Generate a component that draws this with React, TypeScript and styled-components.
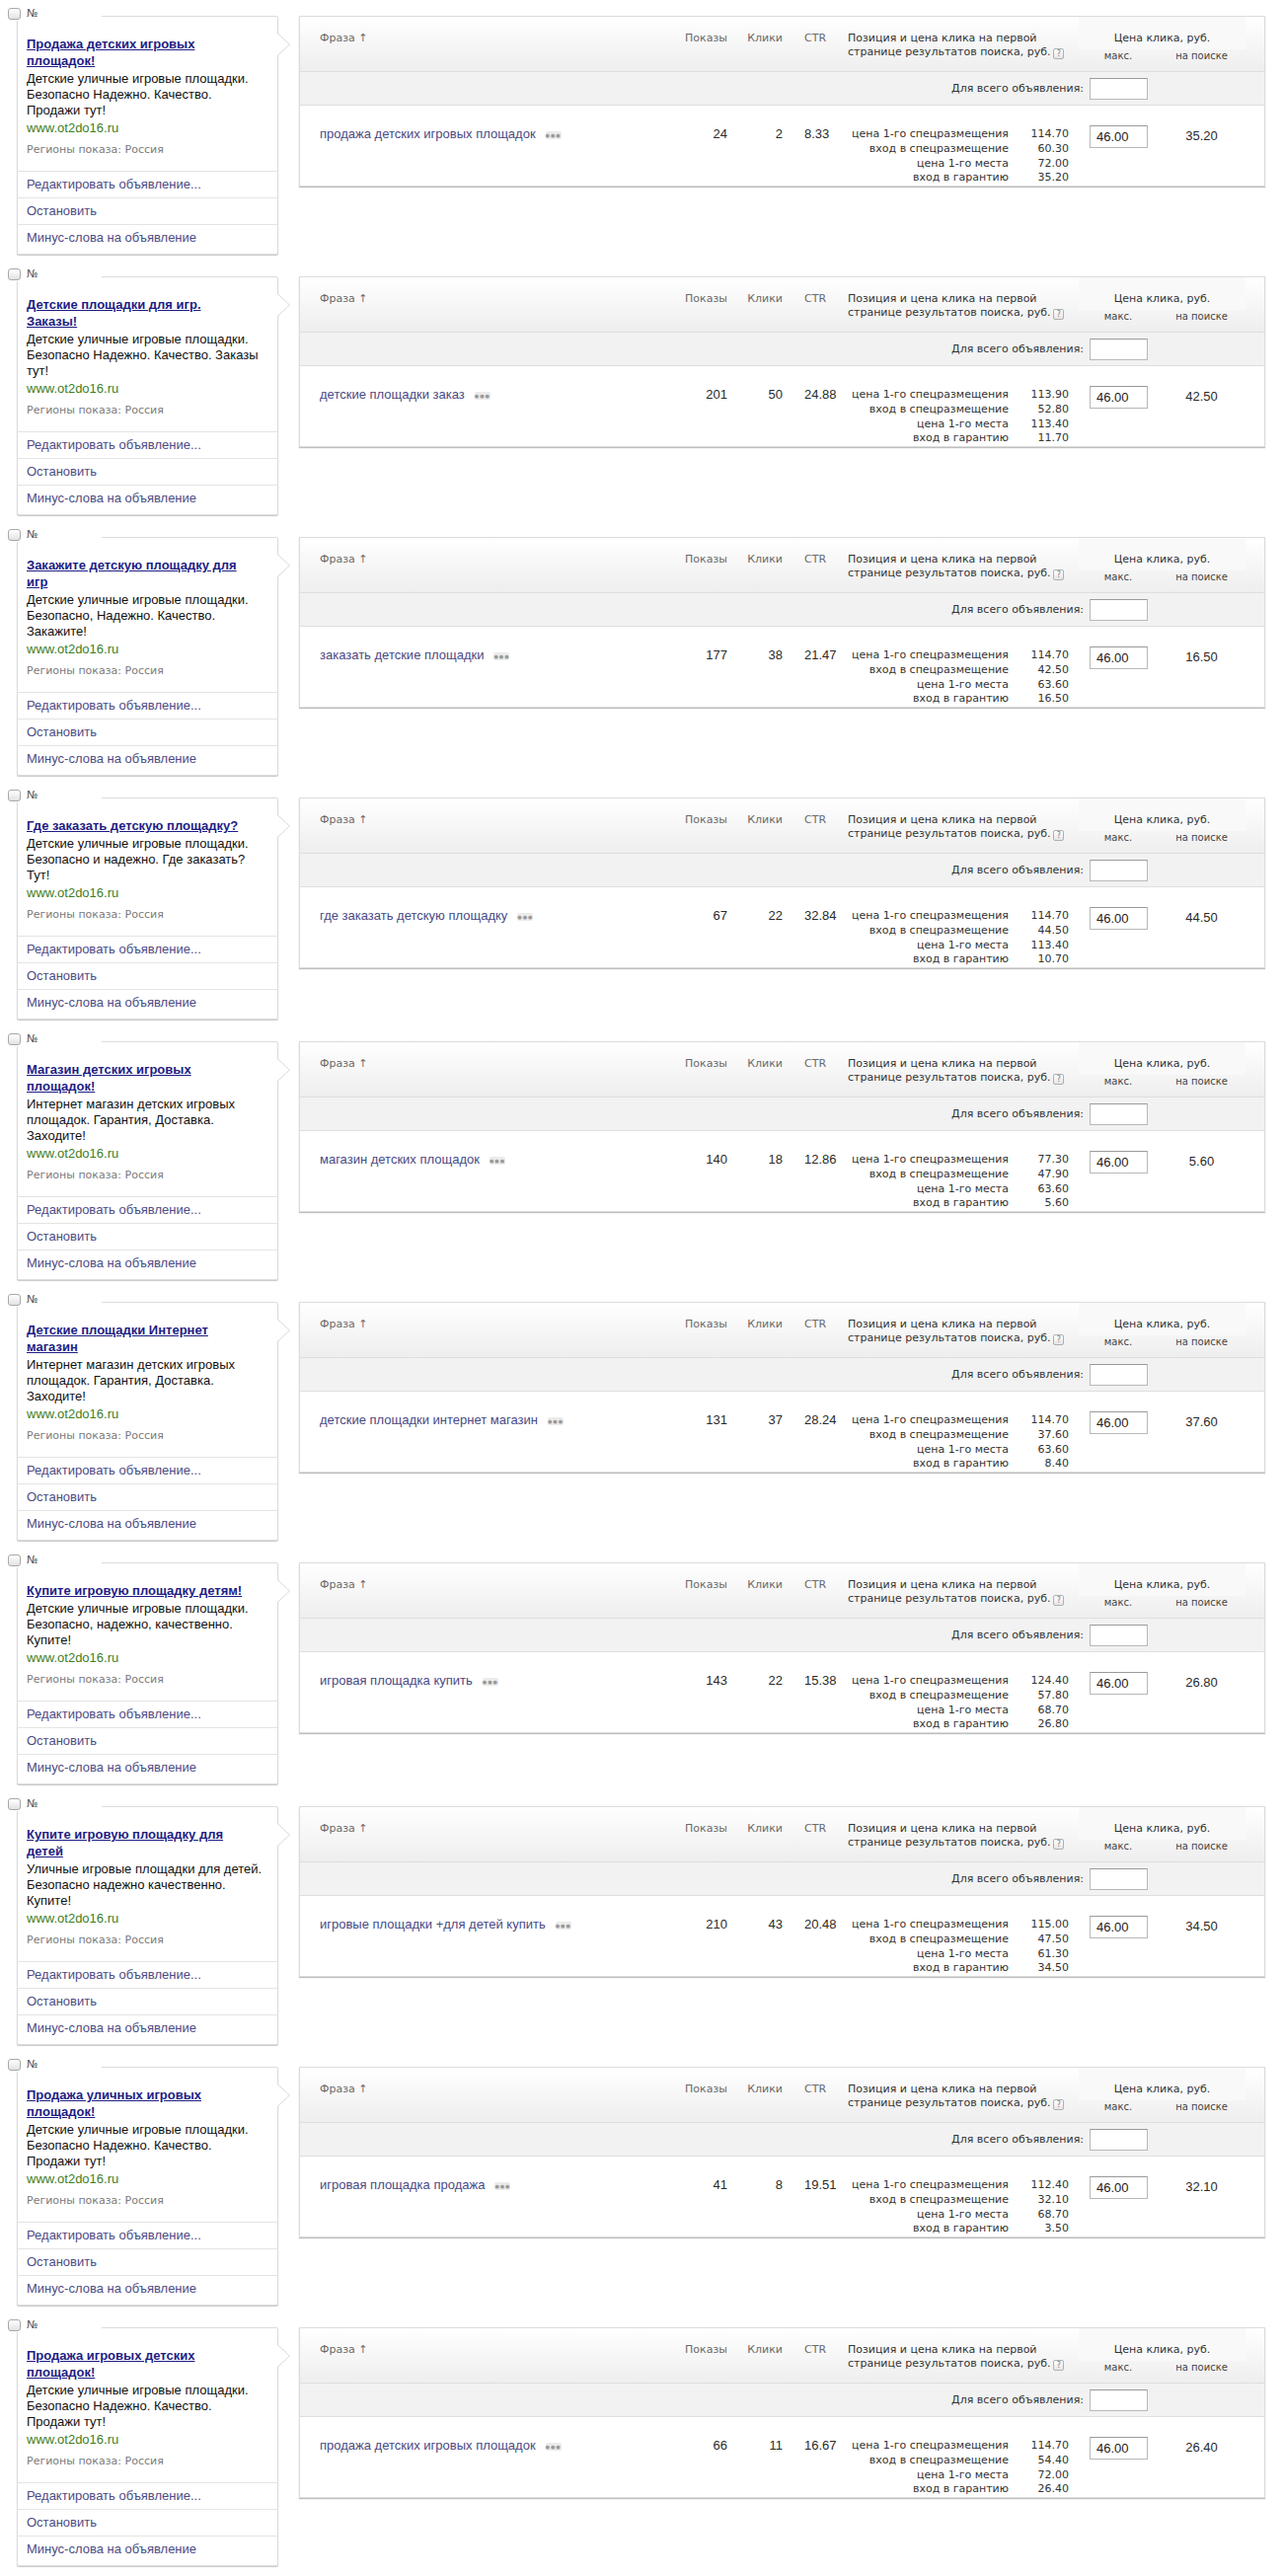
import React from "react";
import styled, { createGlobalStyle } from "styled-components";

const ARIAL = `"Liberation Sans", Arial, sans-serif`;
const VERDANA = `"DejaVu Sans", Verdana, sans-serif`;

type Ad = {
  title: string[];
  text: string[];
  phrase: string;
  shows: number;
  clicks: number;
  ctr: string;
  prices: string[];
  bid: string;
  search: string;
};

const priceLabels = [
  "цена 1-го спецразмещения",
  "вход в спецразмещение",
  "цена 1-го места",
  "вход в гарантию",
];

const ads: Ad[] = [
  {
    title: ["Продажа детских игровых", "площадок!"],
    text: ["Детские уличные игровые площадки.", "Безопасно Надежно. Качество.", "Продажи тут!"],
    phrase: "продажа детских игровых площадок",
    shows: 24,
    clicks: 2,
    ctr: "8.33",
    prices: ["114.70", "60.30", "72.00", "35.20"],
    bid: "46.00",
    search: "35.20",
  },
  {
    title: ["Детские площадки для игр.", "Заказы!"],
    text: ["Детские уличные игровые площадки.", "Безопасно Надежно. Качество. Заказы", "тут!"],
    phrase: "детские площадки заказ",
    shows: 201,
    clicks: 50,
    ctr: "24.88",
    prices: ["113.90", "52.80", "113.40", "11.70"],
    bid: "46.00",
    search: "42.50",
  },
  {
    title: ["Закажите детскую площадку для", "игр"],
    text: ["Детские уличные игровые площадки.", "Безопасно, Надежно. Качество.", "Закажите!"],
    phrase: "заказать детские площадки",
    shows: 177,
    clicks: 38,
    ctr: "21.47",
    prices: ["114.70", "42.50", "63.60", "16.50"],
    bid: "46.00",
    search: "16.50",
  },
  {
    title: ["Где заказать детскую площадку?"],
    text: ["Детские уличные игровые площадки.", "Безопасно и надежно. Где заказать?", "Тут!"],
    phrase: "где заказать детскую площадку",
    shows: 67,
    clicks: 22,
    ctr: "32.84",
    prices: ["114.70", "44.50", "113.40", "10.70"],
    bid: "46.00",
    search: "44.50",
  },
  {
    title: ["Магазин детских игровых", "площадок!"],
    text: ["Интернет магазин детских игровых", "площадок. Гарантия, Доставка.", "Заходите!"],
    phrase: "магазин детских площадок",
    shows: 140,
    clicks: 18,
    ctr: "12.86",
    prices: ["77.30", "47.90", "63.60", "5.60"],
    bid: "46.00",
    search: "5.60",
  },
  {
    title: ["Детские площадки Интернет", "магазин"],
    text: ["Интернет магазин детских игровых", "площадок. Гарантия, Доставка.", "Заходите!"],
    phrase: "детские площадки интернет магазин",
    shows: 131,
    clicks: 37,
    ctr: "28.24",
    prices: ["114.70", "37.60", "63.60", "8.40"],
    bid: "46.00",
    search: "37.60",
  },
  {
    title: ["Купите игровую площадку детям!"],
    text: ["Детские уличные игровые площадки.", "Безопасно, надежно, качественно.", "Купите!"],
    phrase: "игровая площадка купить",
    shows: 143,
    clicks: 22,
    ctr: "15.38",
    prices: ["124.40", "57.80", "68.70", "26.80"],
    bid: "46.00",
    search: "26.80",
  },
  {
    title: ["Купите игровую площадку для", "детей"],
    text: ["Уличные игровые площадки для детей.", "Безопасно надежно качественно.", "Купите!"],
    phrase: "игровые площадки +для детей купить",
    shows: 210,
    clicks: 43,
    ctr: "20.48",
    prices: ["115.00", "47.50", "61.30", "34.50"],
    bid: "46.00",
    search: "34.50",
  },
  {
    title: ["Продажа уличных игровых", "площадок!"],
    text: ["Детские уличные игровые площадки.", "Безопасно Надежно. Качество.", "Продажи тут!"],
    phrase: "игровая площадка продажа",
    shows: 41,
    clicks: 8,
    ctr: "19.51",
    prices: ["112.40", "32.10", "68.70", "3.50"],
    bid: "46.00",
    search: "32.10",
  },
  {
    title: ["Продажа игровых детских", "площадок!"],
    text: ["Детские уличные игровые площадки.", "Безопасно Надежно. Качество.", "Продажи тут!"],
    phrase: "продажа детских игровых площадок",
    shows: 66,
    clicks: 11,
    ctr: "16.67",
    prices: ["114.70", "54.40", "72.00", "26.40"],
    bid: "46.00",
    search: "26.40",
  },
];

const GlobalStyle = createGlobalStyle`
  body {
    margin: 0;
    background: #fff;
    font-family: ${ARIAL};
  }
`;

const Page = styled.div`
  display: flex;
  flex-direction: column;
  gap: 22px;
  padding: 16px 18px 8px 17px;
`;

const Block = styled.div`
  display: flex;
  align-items: flex-start;
  gap: 21px;
`;

/* ---------- ad card ---------- */

const Card = styled.div`
  position: relative;
  width: 265px;
  box-sizing: border-box;
  border: 1px solid #dcdcdc;
  border-radius: 2px;
  box-shadow: 0 1px 1px rgba(0, 0, 0, 0.22);
  background: #fff;
  padding-bottom: 3px;

  &::before,
  &::after {
    content: "";
    position: absolute;
    left: 100%;
    width: 0;
    height: 0;
  }

  &::before {
    top: 16px;
    border-left: 13px solid #d6d6d6;
    border-top: 12px solid transparent;
    border-bottom: 12px solid transparent;
  }

  &::after {
    top: 17px;
    border-left: 12px solid #fff;
    border-top: 11px solid transparent;
    border-bottom: 11px solid transparent;
  }
`;

const NumLabel = styled.div`
  position: absolute;
  top: -10px;
  left: -11px;
  width: 95px;
  height: 14px;
  padding-left: 1px;
  display: flex;
  align-items: center;
  gap: 6px;
  background: #fff;
  font: 11px/14px ${VERDANA};
  color: #555;
`;

const Check = styled.span`
  display: block;
  width: 13px;
  height: 12px;
  box-sizing: border-box;
  border: 1px solid #a8a8a8;
  border-radius: 3px;
  background: linear-gradient(#ffffff, #e2e2e2);
`;

const CardBody = styled.div`
  padding: 19px 9px 14px 9px;
`;

const Title = styled.a`
  display: block;
  margin-bottom: 2px;
  font: bold 13px/17px ${ARIAL};
  color: #1d1d85;
  text-decoration: underline;
`;

const Text = styled.div`
  font: 13px/16px ${ARIAL};
  color: #111;
`;

const Url = styled.div`
  margin-top: 2px;
  font: 13px/16px ${ARIAL};
  color: #3f7d24;
`;

const Regions = styled.div`
  margin-top: 7px;
  font: 11px/14px ${VERDANA};
  color: #7b7b7b;
`;

const ActionLink = styled.a`
  display: block;
  height: 26px;
  padding: 0 9px;
  border-top: 1px solid #e4e4e4;
  font: 13px/26px ${ARIAL};
  color: #4c4c86;
  text-decoration: none;
`;

/* ---------- phrases table ---------- */

const Table = styled.div`
  width: 979px;
  box-sizing: border-box;
  border: 1px solid #dcdcdc;
  box-shadow: 0 1px 1px rgba(0, 0, 0, 0.25);
  background: #fff;
`;

const Grid = styled.div`
  display: grid;
  grid-template-columns: 386px 47px 56px 66px 234px 80px 89px 1fr;
`;

const HeadRow = styled(Grid)`
  height: 55px;
  background: linear-gradient(#ffffff, #eeeeee);
  border-bottom: 1px solid #dedede;
  font: 11px/14px ${VERDANA};
  color: #6a6a6a;
`;

const HeadCell = styled.div<{ $align?: "left" | "right"; $pad?: number; $dark?: boolean }>`
  padding-top: 15px;
  padding-left: ${(p) => p.$pad || 0}px;
  text-align: ${(p) => p.$align || "left"};
  color: ${(p) => (p.$dark ? "#333" : "inherit")};
  white-space: nowrap;
`;

const Help = styled.span`
  display: inline-block;
  width: 11px;
  height: 11px;
  margin-left: 3px;
  box-sizing: border-box;
  border: 1px solid #b0b0b0;
  border-radius: 2px;
  background: linear-gradient(#ffffff, #e6e6e6);
  font: 8px/9px ${VERDANA};
  color: #777;
  text-align: center;
  vertical-align: -1px;
`;

const PriceHead = styled.div`
  grid-column: 6 / 8;
`;

const Band = styled.div`
  padding: 15px 0 4px;
  background: #f9f9f9;
  text-align: center;
  color: #333;
`;

const SubLabels = styled.div`
  display: grid;
  grid-template-columns: 80px 89px;
  font: 10px/14px ${VERDANA};
  color: #444;
  text-align: center;
`;

const SubRow = styled.div`
  height: 33px;
  display: flex;
  align-items: center;
  justify-content: flex-end;
  padding-right: 118px;
  background: #f2f2f2;
  border-bottom: 1px solid #dedede;
  font: 11px ${VERDANA};
  color: #333;
`;

const SubLabel = styled.span`
  margin-right: 6px;
`;

const BidInput = styled.input<{ $h: number }>`
  width: 59px;
  height: ${(p) => p.$h}px;
  box-sizing: border-box;
  margin: 0;
  padding: 0 0 0 6px;
  border: 1px solid #b8b8b8;
  border-top-color: #9a9a9a;
  border-radius: 0;
  background: #fff;
  font: 13px ${ARIAL};
  color: #222;
  outline: none;
`;

const DataRow = styled(Grid)`
  height: 81px;
  font: 13px/16px ${ARIAL};
  color: #2a2a2a;
`;

const Cell = styled.div<{ $align?: "left" | "right" | "center"; $pad?: number; $top?: number }>`
  padding-top: ${(p) => (p.$top === undefined ? 21 : p.$top)}px;
  padding-left: ${(p) => p.$pad || 0}px;
  text-align: ${(p) => p.$align || "left"};
  white-space: nowrap;
`;

const Phrase = styled.a`
  color: #4a4a85;
  text-decoration: none;
`;

const More = styled.span`
  display: inline-block;
  width: 16px;
  height: 8px;
  margin-left: 10px;
  border-radius: 2px;
  background: #ebebeb;
  font: 5px/8px ${VERDANA};
  letter-spacing: 1px;
  color: #9a9a9a;
  text-align: center;
  vertical-align: 1px;
`;

const Prices = styled.div`
  display: grid;
  grid-template-columns: 163px 61px;
  padding-top: 22px;
  font: 11px/13px ${VERDANA};
  color: #333;
  text-align: right;
  white-space: nowrap;
`;

const SearchPrice = styled(Cell)`
  line-height: 19px;
`;

const AdBlock = ({ ad }: { ad: Ad }) => (
  <Block>
    <Card>
      <NumLabel>
        <Check />
        <span>№</span>
      </NumLabel>
      <CardBody>
        <Title href="#">
          {ad.title.map((line, i) => (
            <React.Fragment key={i}>
              {i > 0 && <br />}
              {line}
            </React.Fragment>
          ))}
        </Title>
        <Text>
          {ad.text.map((line, i) => (
            <div key={i}>{line}</div>
          ))}
        </Text>
        <Url>www.ot2do16.ru</Url>
        <Regions>Регионы показа: Россия</Regions>
      </CardBody>
      <ActionLink href="#">Редактировать объявление...</ActionLink>
      <ActionLink href="#">Остановить</ActionLink>
      <ActionLink href="#">Минус-слова на объявление</ActionLink>
    </Card>

    <Table>
      <HeadRow>
        <HeadCell $pad={20}>Фраза ↑</HeadCell>
        <HeadCell $align="right">Показы</HeadCell>
        <HeadCell $align="right">Клики</HeadCell>
        <HeadCell $pad={22}>CTR</HeadCell>
        <HeadCell $dark>
          Позиция и цена клика на первой
          <br />
          странице результатов поиска, руб.
          <Help>?</Help>
        </HeadCell>
        <PriceHead>
          <Band>Цена клика, руб.</Band>
          <SubLabels>
            <span>макс.</span>
            <span>на поиске</span>
          </SubLabels>
        </PriceHead>
      </HeadRow>

      <SubRow>
        <SubLabel>Для всего объявления:</SubLabel>
        <BidInput $h={22} defaultValue="" />
      </SubRow>

      <DataRow>
        <Cell $pad={20}>
          <Phrase href="#">{ad.phrase}</Phrase>
          <More>●●●</More>
        </Cell>
        <Cell $align="right">{ad.shows}</Cell>
        <Cell $align="right">{ad.clicks}</Cell>
        <Cell $pad={22}>{ad.ctr}</Cell>
        <Prices>
          {priceLabels.map((label, i) => (
            <React.Fragment key={label}>
              <span>{label}</span>
              <span>{ad.prices[i]}</span>
            </React.Fragment>
          ))}
        </Prices>
        <Cell $pad={11} $top={20}>
          <BidInput $h={23} defaultValue={ad.bid} />
        </Cell>
        <SearchPrice $align="center">{ad.search}</SearchPrice>
      </DataRow>
    </Table>
  </Block>
);

const App = () => (
  <>
    <GlobalStyle />
    <Page>
      {ads.map((ad, i) => (
        <AdBlock key={i} ad={ad} />
      ))}
    </Page>
  </>
);

export default App;
